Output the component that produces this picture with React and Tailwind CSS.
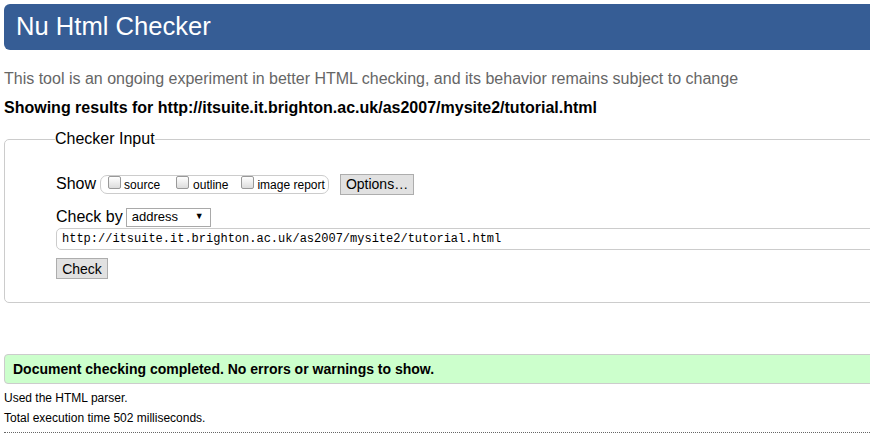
const App = () => {
  return (
    <div className="w-[870px] h-[438px] overflow-hidden bg-white font-['Liberation_Sans',Arial,sans-serif] text-black">
      <div className="w-[900px] pl-1 pt-1">
        <h1 className="h-[46px] bg-[#365d95] rounded-l-[6px] pl-3 flex items-center text-white text-[25.6px] leading-none">
          Nu Html Checker
        </h1>

        <p className="mt-[19px] text-[16px] leading-[20px] text-[#666]">
          This tool is an ongoing experiment in better HTML checking, and its behavior remains subject to change
        </p>
        <p className="mt-[9px] text-[16px] leading-[20px] font-bold">
          Showing results for http://itsuite.it.brighton.ac.uk/as2007/mysite2/tutorial.html
        </p>

        <fieldset className="mt-[11px] h-[174px] border border-[#ccc] rounded-l-[5px] pl-[51px] pr-0 pt-0">
          <legend className="px-0 text-[16px] leading-[20px] -ml-[1px]">Checker Input</legend>

          <div className="mt-[24px] flex items-center h-[22px]">
            <span className="text-[16px] leading-[20px]">Show</span>
            <div className="ml-[4px] h-[19px] w-[229px] border border-[#ccc] rounded-[7px] flex items-center pl-[7px] text-[12px]">
              <span className="w-[13px] h-[13px] border border-[#999] rounded-[2px] bg-gradient-to-b from-[#fff] to-[#dcdcdc] -mt-[3px]"></span>
              <span className="ml-[3px] mt-[1px]">source</span>
              <span className="ml-[16px] w-[13px] h-[13px] border border-[#999] rounded-[2px] bg-gradient-to-b from-[#fff] to-[#dcdcdc] -mt-[3px]"></span>
              <span className="ml-[4px] mt-[1px]">outline</span>
              <span className="ml-[13px] w-[13px] h-[13px] border border-[#999] rounded-[2px] bg-gradient-to-b from-[#fff] to-[#dcdcdc] -mt-[3px]"></span>
              <span className="ml-[3px] mt-[1px]">image report</span>
            </div>
            <button className="ml-[11px] h-[21px] w-[74px] border border-[#adadad] bg-[#e1e1e1] text-[14px] leading-none">
              Options…
            </button>
          </div>

          <div className="mt-[12px] flex items-center h-[20px]">
            <span className="text-[16px] leading-[20px]">Check by</span>
            <div className="ml-[3px] h-[19px] w-[85px] border border-[#a9a9a9] flex items-center justify-between pl-[5px] pr-[6px] text-[13px]">
              <span>address</span>
              <span className="text-[9px]">▼</span>
            </div>
          </div>

          <div className="mt-[1px] h-[22px] border border-[#ccc] rounded-l-[5px] flex items-center pl-[5px] font-['Liberation_Mono',monospace] text-[12px]">
            http://itsuite.it.brighton.ac.uk/as2007/mysite2/tutorial.html
          </div>

          <button className="mt-[8px] h-[21px] w-[52px] border border-[#adadad] bg-[#e1e1e1] text-[14px] leading-none">
            Check
          </button>
        </fieldset>

        <div className="mt-[51px] h-[30px] border border-[#ccc] rounded-l-[4px] bg-[#ccffcc] flex items-center pl-[8px] text-[14px] font-bold">
          Document checking completed. No errors or warnings to show.
        </div>

        <p className="mt-[6px] text-[12px] leading-[16px]">Used the HTML parser.</p>
        <p className="mt-[4px] text-[12px] leading-[16px]">Total execution time 502 milliseconds.</p>
        <div className="mt-[6px] border-t border-dotted border-[#666]"></div>
      </div>
    </div>
  );
};

export default App;
